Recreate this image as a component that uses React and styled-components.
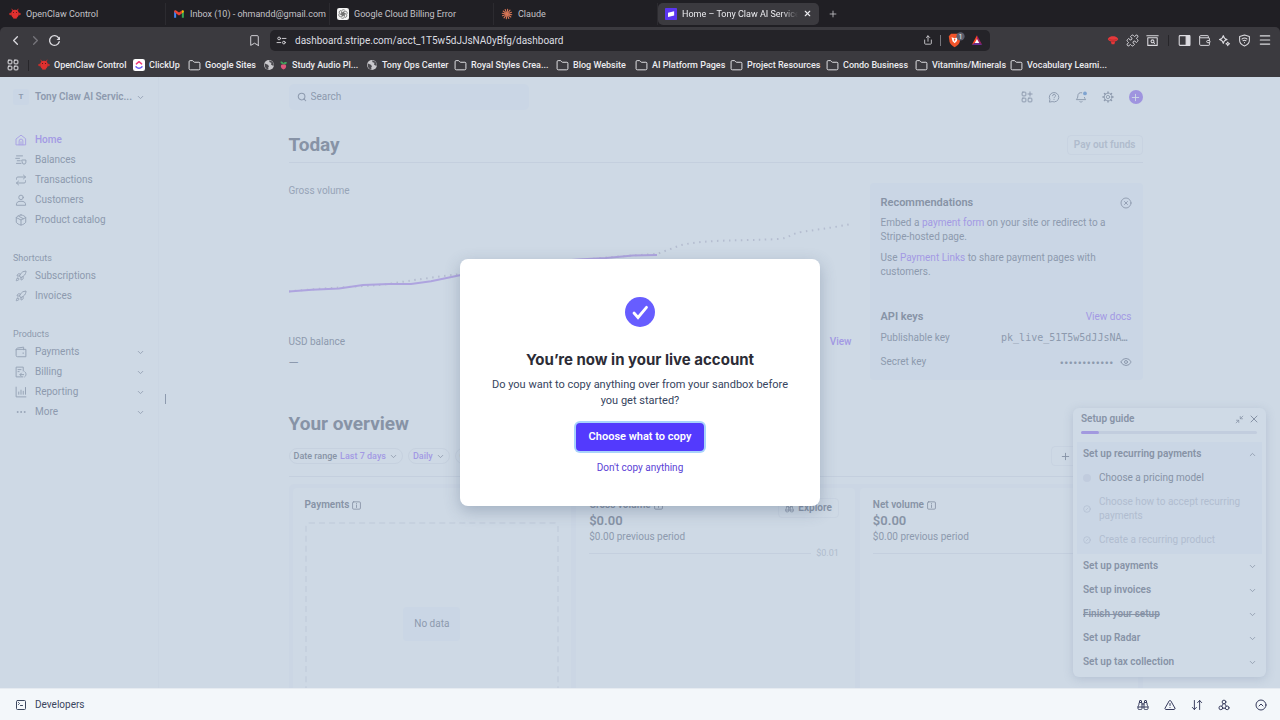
import React from "react";
import styled, { createGlobalStyle } from "styled-components";
import {
  ChevronLeft, ChevronRight, ChevronDown, ChevronUp, Bookmark, Folder, Plus, X, Share,
  Puzzle, Wallet, Menu, Search, Rocket, Ellipsis, CircleX, Eye, Binoculars,
  Minimize2, CircleChevronUp, TriangleAlert, SquareTerminal, CircleSlash,
} from "lucide-react";

const color = {
  strip: "#201f24",
  bar: "#3b3a3f",
  field: "#242328",
  page: "#ced9e5",
  panel: "#cad6e5",
  line: "#c4cfde",
  text: "#8d9aae",
  strong: "#8793a6",
  faint: "#b0bccd",
  link: "#a399e4",
  ink: "#353a5c",
};

const Global = createGlobalStyle`
  *, *::before, *::after { box-sizing: border-box; }
  body { margin: 0; background: ${color.page}; }
  body, button, input { font-family: Roboto, "Liberation Sans", sans-serif; font-size: 10px; line-height: 14px; }
  button { background: none; border: 0; padding: 0; color: inherit; cursor: pointer; }
  h1, h2, h3, p, ul { margin: 0; padding: 0; }
  ul { list-style: none; }
  a { color: inherit; text-decoration: none; }
  svg { display: block; flex: none; }
`;

const Screen = styled.div`
  height: 100vh;
  display: flex;
  flex-direction: column;
  overflow: hidden;
`;

/* Browser window */
const TabStrip = styled.div`
  flex: none;
  height: 27px;
  padding-left: 2px;
  display: flex;
  align-items: center;
  background: ${color.strip};
  color: #c4c3c8;
`;
const Tab = styled.button`
  width: 164px;
  height: 22px;
  padding: 0 7px;
  display: flex;
  align-items: center;
  gap: 5px;
  border-right: 1px solid #2c2b30;
  font-size: 9px;
`;
const TabTitle = styled.span`
  flex: 1;
  min-width: 0;
  text-align: left;
  white-space: nowrap;
`;
const ActiveTab = styled(Tab)`
  width: 161px;
  border: 0;
  border-radius: 5px;
  background: ${color.bar};
  color: #ececf0;
  & > ${TabTitle} { mask-image: linear-gradient(90deg, #000 calc(100% - 16px), transparent); }
`;
const NewTab = styled.button`
  padding: 0 9px;
`;
const ToolbarWrap = styled.div`
  flex: none;
  background: ${color.strip};
`;
const Toolbar = styled.div`
  height: 26px;
  padding: 0 8px;
  display: flex;
  align-items: center;
  background: ${color.bar};
  color: #dcdbe0;
  border-radius: 5px 5px 0 0;
`;
const NavButtons = styled.div`
  width: 240px;
  display: flex;
  align-items: center;
  gap: 5px;
`;
const ToolIcon = styled.button`
  display: grid;
  place-items: center;
  min-width: 12px;
  color: ${(p) => (p.$dim ? "#77767c" : "inherit")};
`;
const UrlField = styled.div`
  flex: 1;
  max-width: 720px;
  height: 21px;
  margin: 0 auto 0 9px;
  padding: 0 7px 0 6px;
  display: flex;
  align-items: center;
  gap: 6px;
  background: ${color.field};
  border-radius: 5px;
`;
const UrlInput = styled.input`
  flex: 1;
  min-width: 0;
  height: 18px;
  padding: 0 2px;
  border: 0;
  outline: 0;
  background: none;
  color: #dddde1;
`;
const Divider = styled.span`
  width: 1px;
  height: 11px;
  background: ${(p) => (p.$dark ? "#27262a" : "#77767c")};
`;
const Extensions = styled.div`
  display: flex;
  align-items: center;
  gap: 7px;
  & > ${Divider} { margin: 0 2px; }
`;
const Bookmarks = styled.nav`
  flex: none;
  height: 24px;
  padding: 0 7px;
  display: flex;
  align-items: center;
  background: ${color.bar};
  color: #ececf0;
  white-space: nowrap;
  overflow: hidden;
`;
const BookmarkLink = styled.a`
  flex: none;
  width: ${(p) => p.$w}px;
  display: flex;
  align-items: center;
  gap: 4px;
  font-size: 9px;
  font-weight: 500;
`;
const BookmarkSep = styled(Divider)`
  margin: 0 9px;
`;

/* Dashboard */
const Page = styled.div`
  flex: 1;
  min-height: 0;
  position: relative;
  display: flex;
  overflow: hidden;
  background: ${color.page};
  color: ${color.text};
`;
const Sidebar = styled.aside`
  flex: none;
  width: 159px;
  padding: 0 13px;
  border-right: 1px solid #cbd6e3;
  & svg { opacity: 0.85; }
`;
const Account = styled.button`
  width: 100%;
  height: 40px;
  display: flex;
  align-items: center;
  gap: 6px;
  font-weight: 600;
  white-space: nowrap;
  & > svg { margin-left: -2px; }
`;
const Avatar = styled.span`
  flex: none;
  width: 16px;
  height: 16px;
  border-radius: 3px;
  background: ${color.panel};
  font-size: 8px;
  line-height: 16px;
  text-align: center;
`;
const NavGroup = styled.div`
  padding-top: ${(p) => (p.$first ? 13 : 20)}px;
`;
const NavLabel = styled.h3`
  font-size: 9px;
  font-weight: 400;
  line-height: 16px;
`;
const NavItem = styled.a`
  height: 20px;
  padding: 0 0 0 2px;
  display: flex;
  align-items: center;
  gap: 8px;
  font-weight: ${(p) => (p.$active ? 500 : 400)};
  color: ${(p) => (p.$active ? color.link : "inherit")};
  & > span { flex: 1; }
`;
const Grip = styled.span`
  align-self: flex-start;
  width: 1px;
  height: 10px;
  margin: 317px 0 0 6px;
  background: ${color.text};
`;
const Main = styled.main`
  flex: 1;
  min-width: 0;
  padding: 0 15px 0 0;
`;
const Content = styled.div`
  max-width: 854px;
  margin: 0 auto;
`;
const TopBar = styled.header`
  height: 40px;
  display: flex;
  align-items: center;
  justify-content: space-between;
`;
const SearchBox = styled.label`
  width: 240px;
  height: 26px;
  padding: 0 8px;
  display: flex;
  align-items: center;
  gap: 4px;
  background: ${color.panel};
  border-radius: 5px;
`;
const SearchInput = styled.input`
  flex: 1;
  min-width: 0;
  padding: 0;
  border: 0;
  outline: 0;
  background: none;
  &::placeholder { color: ${color.text}; opacity: 1; }
`;
const TopActions = styled.div`
  display: flex;
  align-items: center;
  gap: 15px;
`;
const AddButton = styled.button`
  width: 14px;
  height: 14px;
  display: grid;
  place-items: center;
  border-radius: 7px;
  background: #9f94df;
  color: ${color.page};
`;
const TitleRow = styled.div`
  height: 36px;
  margin-top: 10px;
  display: flex;
  align-items: center;
  justify-content: space-between;
  border-bottom: 1px solid ${color.line};
`;
const Title = styled.h1`
  font-size: 19px;
  line-height: 24px;
  font-weight: 700;
  color: ${color.strong};
`;
const Outlined = styled.button`
  height: 20px;
  padding: 0 ${(p) => (p.$wide ? 8 : 6)}px;
  display: flex;
  align-items: center;
  gap: 4px;
  border: 1px solid #c8d3e1;
  border-radius: 4px;
  font-weight: 600;
  color: ${(p) => (p.$dim ? color.faint : color.strong)};
`;
const Today = styled.section`
  margin-top: 20px;
  display: grid;
  grid-template-columns: minmax(0, 1fr) 273px;
  gap: 18px;
`;
const ChartLabel = styled.p`
  line-height: 16px;
  color: #97a4b7;
`;
const Chart = styled.svg`
  width: 100%;
  height: 136px;
`;
const Between = styled.div`
  display: flex;
  align-items: center;
  justify-content: space-between;
  margin-top: ${(p) => p.$top || 0}px;
`;
const Link = styled.a`
  color: ${color.link};
  font-weight: ${(p) => (p.$medium ? 500 : 400)};
`;
const Dash = styled.p`
  margin-top: 7px;
  font-size: 13px;
`;
const SidePanel = styled.div`
  padding: 12px 11px 11px;
  background: ${color.panel};
  border-radius: 4px;
`;
const PanelTitle = styled.h2`
  font-size: 11px;
  line-height: 16px;
  font-weight: 600;
  color: ${color.strong};
`;
const Note = styled.p`
  margin-top: ${(p) => p.$top}px;
`;
const KeyValue = styled.span`
  padding-right: 4px;
  font-family: "DejaVu Sans Mono", monospace;
`;
const Secret = styled.span`
  display: flex;
  align-items: center;
  gap: 6px;
  font-family: Inter, sans-serif;
  font-size: 8px;
`;
const Overview = styled.section`
  margin-top: 32px;
`;
const Filters = styled.div`
  height: 41px;
  display: flex;
  align-items: center;
  gap: 5px;
  border-bottom: 1px solid ${color.line};
`;
const Pill = styled.button`
  height: 16px;
  padding: 0 4px;
  display: flex;
  align-items: center;
  gap: 3px;
  border: 1px solid #c6d1df;
  border-radius: 8px;
  font-weight: 500;
  white-space: nowrap;
  color: ${color.strong};
  font-size: 9px;
  & > em { font-style: normal; color: ${color.link}; }
  & > em:not(:first-child) { margin-left: 5px; }
`;
const Spring = styled.span`
  flex: 1;
`;
const Cards = styled.div`
  height: 256px;
  margin-top: 7px;
  padding: 4px;
  display: grid;
  grid-template-columns: repeat(3, minmax(0, 1fr));
  gap: 5px;
  background: #cbd6e4;
  border-radius: 5px;
`;
const Card = styled.article`
  padding: 10px 12px;
  display: flex;
  flex-direction: column;
  background: ${color.page};
  border-radius: 4px;
`;
const MetricCard = styled(Card)`
  padding: 10px 16px 10px 13px;
`;
const CardHead = styled.div`
  display: flex;
  justify-content: space-between;
  height: 14px;
`;
const CardTitle = styled.h3`
  display: flex;
  align-items: center;
  gap: 3px;
  font-size: 10px;
  line-height: 14px;
  font-weight: 600;
  color: ${color.strong};
`;
const Amount = styled.strong`
  font-size: 13px;
  line-height: 18px;
  font-weight: 600;
  color: ${color.strong};
`;
const AxisRow = styled.div`
  height: 14px;
  margin-top: 2px;
  display: flex;
  align-items: center;
  gap: 5px;
  font-size: 9px;
  color: ${color.faint};
  &::before { content: ""; flex: 1; height: 1px; background: ${color.line}; }
`;
const Empty = styled.div`
  flex: 1;
  margin-top: 10px;
  display: grid;
  place-items: center;
  border: 2px dashed #c6d1df;
  border-radius: 4px;
  & > span { padding: 10px 11px; border-radius: 4px; background: ${color.panel}; }
`;

/* Setup guide floating over the dashboard */
const Guide = styled.section`
  position: absolute;
  right: 14px;
  bottom: 11px;
  width: 193px;
  padding: 4px 4px 3px;
  border-radius: 6px;
  background: #cfdae6;
  box-shadow: 0 2px 10px rgba(110, 130, 160, 0.28);
`;
const GuideHead = styled.div`
  height: 14px;
  padding: 0 2px 0 4px;
  display: flex;
  align-items: center;
  gap: 4px;
  color: ${color.strong};
  & > h2 { flex: 1; font-size: 10px; font-weight: 600; }
`;
const Progress = styled.div`
  height: 3px;
  margin: 5px 5px 8px 4px;
  border-radius: 2px;
  background: #c2cdde;
  &::before { content: ""; display: block; width: 18px; height: 3px; border-radius: 2px; background: #a299df; }
`;
const GuideOpen = styled.div`
  padding-bottom: 2px;
  background: ${color.panel};
`;
const GuideRow = styled.button`
  width: 100%;
  height: 24px;
  padding: 0 5px 0 6px;
  display: flex;
  align-items: center;
  justify-content: space-between;
  font-weight: 600;
  color: ${color.strong};
  text-decoration: ${(p) => (p.$done ? "line-through" : "none")};
`;
const Step = styled.a`
  padding: 5px 14px 5px 6px;
  display: flex;
  align-items: center;
  gap: 8px;
  color: ${(p) => (p.$dim ? "#b1bdd0" : color.strong)};
`;
const Dot = styled.i`
  width: 8px;
  height: 8px;
  border-radius: 4px;
  background: #c1ccde;
`;

/* Dialog */
const Backdrop = styled.div`
  position: absolute;
  inset: 0;
  display: grid;
  place-items: center;
`;
const Dialog = styled.div`
  width: 360px;
  padding: 38px 24px 30px;
  display: flex;
  flex-direction: column;
  align-items: center;
  text-align: center;
  background: #fff;
  border-radius: 8px;
  color: #36445e;
  box-shadow: 0 5px 16px rgba(60, 80, 110, 0.3);
`;
const DialogTitle = styled.h2`
  margin-top: 23px;
  font-family: Inter, sans-serif;
  font-size: 15px;
  line-height: 20px;
  font-weight: 700;
  color: #2c2c36;
`;
const DialogText = styled.p`
  margin-top: 7px;
  font-size: 11px;
  line-height: 16px;
`;
const Primary = styled.button`
  height: 28px;
  margin-top: 14px;
  padding: 0 13px;
  border-radius: 4px;
  background: #533afd;
  color: #fff;
  font-size: 11px;
  font-weight: 600;
  box-shadow: 0 0 0 2px #a9d3fb;
`;
const Plain = styled.button`
  height: 16px;
  margin-top: 9px;
  color: #5b3fd6;
`;

const Footer = styled.footer`
  flex: none;
  height: 32px;
  padding: 0 13px 0 15px;
  display: flex;
  align-items: center;
  gap: 15px;
  border-top: 1px solid #e6ebf1;
  background: #f3f7fa;
  color: ${color.ink};
`;
const DevButton = styled.button`
  flex: 1;
  display: flex;
  align-items: center;
  gap: 8px;
  color: #3a465e;
`;
const Collapse = styled.button`
  margin-left: 10px;
`;

const Svg = ({ size = 12, children, ...rest }) => (
  <svg width={size} height={size} viewBox="0 0 16 16" fill="none" stroke="currentColor" strokeWidth="1.3" strokeLinecap="round" strokeLinejoin="round" aria-hidden="true" {...rest}>
    {children}
  </svg>
);

const Claw = () => (
  <Svg stroke="none">
    <path d="M5 3.500L4 1.500M11 3.500l1-2" stroke="#c32f2c" />
    <path d="M8 2.200c3.400 0 5.300 2.400 5.300 5.200 0 3.200-2.400 5.600-3.400 6.200v1.200H8.700v-1.200H7.300v1.200H6.100v-1.200C5.100 13 2.700 10.600 2.700 7.400 2.700 4.600 4.600 2.200 8 2.200z" fill="#e0302f" />
    <circle cx="1.900" cy="8" r="1.600" fill="#c32f2c" /><circle cx="14.100" cy="8" r="1.600" fill="#c32f2c" />
    <circle cx="6" cy="6" r=".7" fill="#3a1115" /><circle cx="10" cy="6" r=".7" fill="#3a1115" />
  </Svg>
);
const Gmail = () => (
  <Svg stroke="none">
    <path d="M1.500 3.500v9.500h2.700V7.200z" fill="#4285f4" />
    <path d="M14.500 3.500v9.500h-2.700V7.200z" fill="#34a853" />
    <path d="M1.500 4.500c0-1.500 1.600-2.100 2.700-1.300L8 6.100l3.800-2.900v4L8 10.100 4.200 7.200 1.500 5z" fill="#ea4335" />
    <path d="M11.800 3.200c1.100-.8 2.700-.2 2.700 1.300V5.200l-2.700 2z" fill="#fbbc04" />
  </Svg>
);
const OpenAI = () => (
  <Svg strokeWidth="1">
    <rect width="16" height="16" rx="3" fill="#f4f4f4" stroke="none" />
    <g stroke="#555" strokeWidth=".8">
      {[0, 60, 120, 180, 240, 300].map((a) => (
        <path key={a} transform={`rotate(${a} 8 8)`} d="M6.200 7V4.400A2.400 2.400 0 0 1 10.600 3.200M6.200 5.800l3.600 2" />
      ))}
    </g>
  </Svg>
);
const Claude = () => (
  <Svg stroke="#d97757" strokeWidth="1.400">
    {[0, 30, 60, 90, 120, 150].map((a) => (
      <path key={a} transform={`rotate(${a + 8} 8 8)`} d="M8 1.500v13" />
    ))}
  </Svg>
);
const Stripe = () => (
  <Svg stroke="none">
    <rect width="16" height="16" rx="1" fill="#5a35f0" />
    <path d="M4 6.200L12.200 4.300V10L4 11.900z" fill="#fff" />
  </Svg>
);
const ClickUp = () => (
  <Svg strokeWidth="2">
    <rect width="16" height="16" rx="3" fill="#fff" stroke="none" />
    <path d="M4.500 6.500L8 3.600l3.500 2.900" stroke="#f0407a" />
    <path d="M4 10.300c2.200 2.700 5.800 2.700 8 0" stroke="#6a5cf5" />
  </Svg>
);
const GlobeMark = () => (
  <Svg stroke="none">
    <circle cx="8" cy="8" r="6.600" fill="#c9c8cc" />
    <path d="M2.500 6l4 1.500 1.500 2-1 1.500.3 3C4 14 1.800 10.500 2.500 6zM8 2l.8 2.300 2.400.7-.4 2.500 3.200 1.700.3-2.200C14 4 11 2 8 2z" fill="#4a494e" />
  </Svg>
);
const Radish = () => (
  <Svg stroke="none" size={9}>
    <path d="M8 6C3 5 2 3 3 1c3 0 4 1 5 3 1-2 3-3 6-2 0 3-2 4-6 4z" fill="#3fa35b" />
    <path d="M5 6h6c3 2 2 7-3 9-5-2-6-7-3-9z" fill="#e0567c" />
  </Svg>
);
const GridIcon = ({ plus }) => (
  <Svg>
    <rect x="1.500" y="1.500" width="5" height="5" rx="1" />
    <rect x="1.500" y="9.500" width="5" height="5" rx="1" />
    <rect x="9.500" y="9.500" width="5" height="5" rx="1" />
    {plus ? <path d="M12 1.200v5.600M9.200 4h5.600" /> : <rect x="9.500" y="1.500" width="5" height="5" rx="1" />}
  </Svg>
);
const Reload = () => (
  <Svg size={13} strokeWidth="1.600">
    <path d="M13.800 9.500A6 6 0 1 1 13 4.700" />
    <path d="M14.800 3.200v4.300h-4.300z" fill="currentColor" stroke="none" />
  </Svg>
);
const Tune = () => (
  <Svg size={11}>
    <circle cx="4.500" cy="5" r="2" /><path d="M9 5h5.500" /><circle cx="11.500" cy="11" r="2" /><path d="M1.500 11H7" />
  </Svg>
);
const Brave = () => (
  <Svg size={18} viewBox="0 0 20 18" stroke="none">
    <path d="M4.500 2h8L15 4.800l-.8 6.200c-.5 2.500-2.700 4.500-5.700 6-3-1.500-5.200-3.500-5.700-6L2 4.800z" fill="#f2542a" />
    <path d="M5 6l3.500 1L12 6l-1.200 4.500-2.300 2.200-2.300-2.200z" fill="#fff" />
    <path d="M7.500 7.500h2L8.500 11z" fill="#f2542a" />
    <circle cx="15" cy="5" r="4.600" fill="#5c5e6c" />
    <text x="15" y="7.400" textAnchor="middle" fontSize="7" fill="#fff">1</text>
  </Svg>
);
const Bat = () => (
  <Svg stroke="none">
    <path d="M8 1.500L1 14.500 8 10z" fill="#ff4724" /><path d="M8 1.500l7 13L8 10z" fill="#9e1f63" />
    <path d="M1 14.500h14L8 10z" fill="#662d91" /><path d="M8 6.500l3 5.500H5z" fill="#fff" />
  </Svg>
);
const RedHat = () => (
  <Svg stroke="none">
    <path d="M1 6.500C3 3.500 5.500 3 8 3s5 .5 7 3.500c-1 2-2.500 2.800-4 3L9.800 13.500H6.200L5 9.500C3.500 9.300 2 8.500 1 6.500z" fill="#e5393b" />
    <path d="M3.500 7.500c2.500 1 6.500 1 9 0M6 10.200h4" stroke="#a52326" strokeWidth=".8" />
  </Svg>
);
const SidePanelIcon = () => (
  <Svg size={13}><rect x="1.500" y="2" width="13" height="12" rx="1" /><path d="M10 2h4.500v12H10z" fill="currentColor" /></Svg>
);
const SearchWindow = () => (
  <Svg size={13}><path d="M1 2.200h14M2.200 4.500h11.600v9.500H2.200z" /><circle cx="8" cy="9" r="1.800" /><path d="M9.500 10.500l1 1" /></Svg>
);
const Leo = () => (
  <Svg size={13}><path d="M6.500 2c.6 3 1.500 4 4.600 4.800C8 7.600 7 8.600 6.500 11.600 6 8.600 5 7.600 1.800 6.800 5 6 6 5 6.500 2zM12 10c.3 1.300.7 1.700 2.200 2.100-1.500.4-1.900.9-2.200 2.200-.3-1.300-.8-1.800-2.200-2.200 1.400-.4 1.900-.8 2.200-2.100z" /></Svg>
);
const ShieldWifi = () => (
  <Svg size={13}><path d="M8 1.200l6 2v4.600c0 3.500-2.800 5.800-6 7-3.200-1.200-6-3.500-6-7V3.200z" /><path d="M4.800 6.200c2-1.600 4.400-1.600 6.400 0M6.200 8.300c1.200-.8 2.400-.8 3.600 0M8 10.500v.2" /></Svg>
);

const HomeIcon = () => (
  <Svg><path d="M1.800 6.300L8 1.500l6.200 4.800v8.200H1.800zM5.500 14.500V9.300a2.500 2.500 0 0 1 5 0v5.200M8 14.500v-4.200" /></Svg>
);
const BalanceIcon = () => (
  <Svg><path d="M2 2.500h8M1 5.800h5M3 9h4M2 12.500h6" /><path d="M9.500 8h5v3a2.500 2.500 0 0 1-5 0z" /></Svg>
);
const TransferIcon = () => (
  <Svg><path d="M2 7V5.800A1.800 1.800 0 0 1 3.800 4H14M11.300 1.500L14 4l-2.700 2.500M14 9v1.200a1.800 1.800 0 0 1-1.800 1.800H2M4.700 9.500L2 12l2.700 2.500" /></Svg>
);
const PersonIcon = () => (
  <Svg><circle cx="8" cy="4.500" r="3" /><path d="M1.800 14.500c0-3.800 2.200-4.800 6.200-4.800s6.200 1 6.200 4.800z" /></Svg>
);
const BoxIcon = () => (
  <Svg><path d="M8 1.200c3 .6 5 1.600 6.300 3.300v6.500c-1.300 1.900-3.300 3.100-6.300 3.800-3-.7-5-1.900-6.300-3.800V4.500C3 2.800 5 1.800 8 1.200zM1.800 4.800L8 8l6.200-3.200M8 8v6.500M5 3l6 3.200" /></Svg>
);
const PaymentsIcon = () => (
  <Svg><path d="M1.500 5v7.500a1.800 1.800 0 0 0 1.800 1.800h11.200V5zM1.500 5c0-1.500 1-2 2-2.300l8-1.200V5M10.500 9.500h1" /></Svg>
);
const BillingIcon = () => (
  <Svg><path d="M10.500 14.500H1.500v-13h9.500v5.200M4 4.800h4M4 7.500h1.500M8.500 9.500L6.500 11.500l2 2M7 11.500h4.500M13 7.500c2.300 1.800 2.300 5.200 0 7" /></Svg>
);
const ReportIcon = () => (
  <Svg><path d="M1.500 1.500v13h13M5 11V8M8 11V5.500M11 11V7M14 11V2" /></Svg>
);
const HelpIcon = () => (
  <Svg><path d="M2 14.300l.5-3A6.300 6.300 0 1 1 6 14.300zM6.200 6.300a1.900 1.900 0 1 1 2.700 1.700c-.6.300-.8.600-.8 1.100M8 11.400v.1" /></Svg>
);
const BellIcon = () => (
  <Svg><path d="M9 2.300c-3-.7-5.200 1.200-5.200 4 0 2.700-.8 3.500-2 5.200h12.400c-.8-1-1.300-1.700-1.600-2.900M6.500 14.300c.9.600 2.100.6 3 0" /><circle cx="13.300" cy="3.300" r="2.500" fill="#7ea3d0" stroke="none" /></Svg>
);
const GearIcon = () => (
  <Svg strokeWidth="1.100">
    <circle cx="8" cy="8" r="5.200" /><circle cx="8" cy="8" r="2.200" />
    <path d="M8 1.200v1.600M8 13.200v1.600M1.200 8h1.600M13.200 8h1.600M3.200 3.200l1.100 1.100M11.700 11.700l1.100 1.100M3.200 12.800l1.100-1.100M11.700 4.300l1.100-1.100" strokeWidth="1.800" />
  </Svg>
);
const WebhookIcon = () => (
  <Svg><circle cx="8" cy="4" r="2.500" /><circle cx="3.800" cy="11.800" r="2.500" /><circle cx="12.200" cy="11.800" r="2.500" /><path d="M7 6.300L5 9.600M9 6.300l2 3.300M6.300 12.300h3.400" /></Svg>
);
const SortIcon = () => (
  <Svg><path d="M4.500 2v12M1.800 11.200L4.500 14l2.700-2.800M11.500 14V2M8.800 4.800L11.500 2l2.700 2.800" /></Svg>
);
const InfoSquare = () => (
  <Svg size={9} strokeWidth="1.500"><rect x="1" y="1.500" width="14" height="13" rx="2" /><path d="M8 7v4.500M8 4.500v.2" /></Svg>
);

const FolderIcon = () => <Folder size={13} strokeWidth={1.700} />;

const tabs = [
  { title: "OpenClaw Control", Icon: Claw },
  { title: "Inbox (10) - ohmandd@gmail.com", Icon: Gmail },
  { title: "Google Cloud Billing Error", Icon: OpenAI },
  { title: "Claude", Icon: Claude },
];

const bookmarks = [
  { title: "OpenClaw Control", Icon: Claw, w: 95 },
  { title: "ClickUp", Icon: ClickUp, w: 55 },
  { title: "Google Sites", Icon: FolderIcon, w: 75 },
  { title: "Study Audio Pl...", Icon: GlobeMark, w: 103, radish: true },
  { title: "Tony Ops Center", Icon: GlobeMark, w: 88 },
  { title: "Royal Styles Crea...", Icon: FolderIcon, w: 102 },
  { title: "Blog Website", Icon: FolderIcon, w: 79 },
  { title: "AI Platform Pages", Icon: FolderIcon, w: 95 },
  { title: "Project Resources", Icon: FolderIcon, w: 96 },
  { title: "Condo Business", Icon: FolderIcon, w: 89 },
  { title: "Vitamins/Minerals", Icon: FolderIcon, w: 95 },
  { title: "Vocabulary Learni...", Icon: FolderIcon, w: 100 },
];

const Browser = () => (
  <>
    <TabStrip>
      {tabs.map(({ title, Icon }) => (
        <Tab key={title}><Icon /><TabTitle>{title}</TabTitle></Tab>
      ))}
      <ActiveTab><Stripe /><TabTitle>Home – Tony Claw AI Services</TabTitle><X size={9} strokeWidth={3} /></ActiveTab>
      <NewTab aria-label="New tab"><Plus size={10} /></NewTab>
    </TabStrip>
    <ToolbarWrap>
      <Toolbar>
        <NavButtons>
          <ToolIcon aria-label="Back"><ChevronLeft size={15} /></ToolIcon>
          <ToolIcon aria-label="Forward" $dim><ChevronRight size={15} /></ToolIcon>
          <ToolIcon aria-label="Reload"><Reload /></ToolIcon>
        </NavButtons>
        <ToolIcon aria-label="Bookmark this page"><Bookmark size={13} strokeWidth={1.700} /></ToolIcon>
        <UrlField>
          <Tune />
          <UrlInput aria-label="Address" defaultValue="dashboard.stripe.com/acct_1T5w5dJJsNA0yBfg/dashboard" />
          <ToolIcon aria-label="Share"><Share size={10} /></ToolIcon>
          <Divider />
          <Brave />
          <Bat />
        </UrlField>
        <Extensions>
          <RedHat />
          <Puzzle size={13} strokeWidth={1.800} />
          <SearchWindow />
          <Divider $dark />
          <SidePanelIcon />
          <Wallet size={13} strokeWidth={1.800} />
          <Leo />
          <ShieldWifi />
          <ToolIcon aria-label="Menu"><Menu size={14} /></ToolIcon>
        </Extensions>
      </Toolbar>
    </ToolbarWrap>
    <Bookmarks aria-label="Bookmarks">
      <GridIcon />
      <BookmarkSep $dark />
      {bookmarks.map(({ title, Icon, w, radish }) => (
        <BookmarkLink key={title} href="#" $w={w}>
          <Icon />{radish && <Radish />}{title}
        </BookmarkLink>
      ))}
    </Bookmarks>
  </>
);

const RocketIcon = () => <Rocket size={12} strokeWidth={1.900} />;
const MoreIcon = () => <Ellipsis size={12} />;

const mainNav = [
  ["Home", HomeIcon], ["Balances", BalanceIcon], ["Transactions", TransferIcon],
  ["Customers", PersonIcon], ["Product catalog", BoxIcon],
];
const shortcuts = [["Subscriptions", RocketIcon], ["Invoices", RocketIcon]];
const products = [["Payments", PaymentsIcon], ["Billing", BillingIcon], ["Reporting", ReportIcon], ["More", MoreIcon]];

const NavList = ({ label, items, first, expandable }) => (
  <NavGroup $first={first}>
    {label && <NavLabel>{label}</NavLabel>}
    {items.map(([name, Icon]) => (
      <NavItem key={name} href="#" $active={name === "Home"}>
        <Icon /><span>{name}</span>{expandable && <ChevronDown size={9} strokeWidth={2.500} />}
      </NavItem>
    ))}
  </NavGroup>
);

const VolumeCard = ({ title, explore }) => (
  <MetricCard>
    <CardHead>
      <CardTitle>{title} <InfoSquare /></CardTitle>
      {explore && <Outlined><Binoculars size={9} /> Explore</Outlined>}
    </CardHead>
    <Amount>$0.00</Amount>
    <span>$0.00 previous period</span>
    <AxisRow>{explore && "$0.01"}</AxisRow>
  </MetricCard>
);

const Dashboard = () => (
  <Main>
    <Content>
      <TopBar>
        <SearchBox><Search size={10} strokeWidth={2.500} /><SearchInput aria-label="Search" placeholder="Search" /></SearchBox>
        <TopActions>
          <GridIcon plus /><HelpIcon /><BellIcon /><GearIcon />
          <AddButton aria-label="Create"><Plus size={11} /></AddButton>
        </TopActions>
      </TopBar>
      <TitleRow><Title>Today</Title><Outlined $dim>Pay out funds</Outlined></TitleRow>
      <Today>
        <div>
          <ChartLabel>Gross volume</ChartLabel>
          <Chart viewBox="0 0 563 136" preserveAspectRatio="none" aria-hidden="true">
            <path d="M0 92.500C20 90 60 88 90 86c20-2 30-5 82-11 60-8 150-18 196-20l24-9c30-6 60-4 98-6 10-1 14-6 22-7 20-3 30-4 50-8" fill="none" stroke="#b5bdd0" strokeWidth="2" strokeDasharray="1.500 4.500" />
            <path d="M0 92.500L23 90.700 50 89.500 74 86 100 85 122 85 142 82.200 172 76 230 65 289 60.500 317 59 344 56.500 368 56" fill="none" stroke="#aea4df" strokeWidth="2" />
          </Chart>
          <Between><span>USD balance</span><Link href="#" $medium>View</Link></Between>
          <Dash>—</Dash>
        </div>
        <SidePanel>
          <Between><PanelTitle>Recommendations</PanelTitle><button aria-label="Dismiss"><CircleX size={12} strokeWidth={1.800} /></button></Between>
          <Note $top={5}>Embed a <Link href="#">payment form</Link> on your site or redirect to a Stripe-hosted page.</Note>
          <Note $top={7}>Use <Link href="#">Payment Links</Link> to share payment pages with customers.</Note>
          <Between $top={30}><PanelTitle>API keys</PanelTitle><Link href="#">View docs</Link></Between>
          <Between $top={6}><span>Publishable key</span><KeyValue>pk_live_51T5w5dJJsNA…</KeyValue></Between>
          <Between $top={10}><span>Secret key</span><Secret>••••••••••••<Eye size={12} /></Secret></Between>
        </SidePanel>
      </Today>
      <Overview>
        <Title as="h2">Your overview</Title>
        <Filters>
          <Pill>Date range <em>Last 7 days</em> <ChevronDown size={9} /></Pill>
          <Pill><em>Daily</em> <ChevronDown size={9} /></Pill>
          <Pill>Compare <em>Previous period</em> <ChevronDown size={9} /></Pill>
          <Spring />
          <Outlined $wide><Plus size={11} /> Add</Outlined>
          <Outlined $wide>Edit</Outlined>
        </Filters>
        <Cards>
          <Card>
            <CardTitle>Payments <InfoSquare /></CardTitle>
            <Empty><span>No data</span></Empty>
          </Card>
          <VolumeCard title="Gross volume" explore />
          <VolumeCard title="Net volume" />
        </Cards>
      </Overview>
    </Content>
  </Main>
);

const SetupGuide = () => (
  <Guide>
    <GuideHead><h2>Setup guide</h2><button aria-label="Minimize"><Minimize2 size={9} /></button><button aria-label="Close guide"><X size={12} /></button></GuideHead>
    <Progress />
    <GuideOpen>
      <GuideRow>Set up recurring payments <ChevronUp size={9} /></GuideRow>
      <Step href="#"><Dot />Choose a pricing model</Step>
      <Step href="#" $dim><CircleSlash size={8} />Choose how to accept recurring payments</Step>
      <Step href="#" $dim><CircleSlash size={8} />Create a recurring product</Step>
    </GuideOpen>
    {["Set up payments", "Set up invoices", "Finish your setup", "Set up Radar", "Set up tax collection"].map((t) => (
      <GuideRow key={t} $done={t === "Finish your setup"}>{t} <ChevronDown size={9} /></GuideRow>
    ))}
  </Guide>
);

const LiveDialog = () => (
  <Backdrop>
    <Dialog role="dialog" aria-modal="true" aria-labelledby="dialog-title">
      <svg width="30" height="30" viewBox="0 0 30 30" aria-hidden="true">
        <circle cx="15" cy="15" r="15" fill="#675dff" />
        <path d="M9 16l4 4.500L21.500 10.300" fill="none" stroke="#fff" strokeWidth="2.800" strokeLinecap="round" />
      </svg>
      <DialogTitle id="dialog-title">You’re now in your live account</DialogTitle>
      <DialogText>Do you want to copy anything over from your sandbox before you get started?</DialogText>
      <Primary>Choose what to copy</Primary>
      <Plain>Don't copy anything</Plain>
    </Dialog>
  </Backdrop>
);

export default function App() {
  return (
    <Screen>
      <Global />
      <Browser />
      <Page>
        <Sidebar>
          <Account><Avatar>T</Avatar><span>Tony Claw AI Servic...</span><ChevronDown size={9} strokeWidth={2.500} /></Account>
          <NavList items={mainNav} first />
          <NavList label="Shortcuts" items={shortcuts} />
          <NavList label="Products" items={products} expandable />
        </Sidebar>
        <Grip />
        <Dashboard />
        <SetupGuide />
        <LiveDialog />
      </Page>
      <Footer>
        <DevButton><SquareTerminal size={12} /> Developers</DevButton>
        <Binoculars size={12} /><TriangleAlert size={12} /><SortIcon /><WebhookIcon />
        <Collapse aria-label="Expand"><CircleChevronUp size={12} /></Collapse>
      </Footer>
    </Screen>
  );
}
